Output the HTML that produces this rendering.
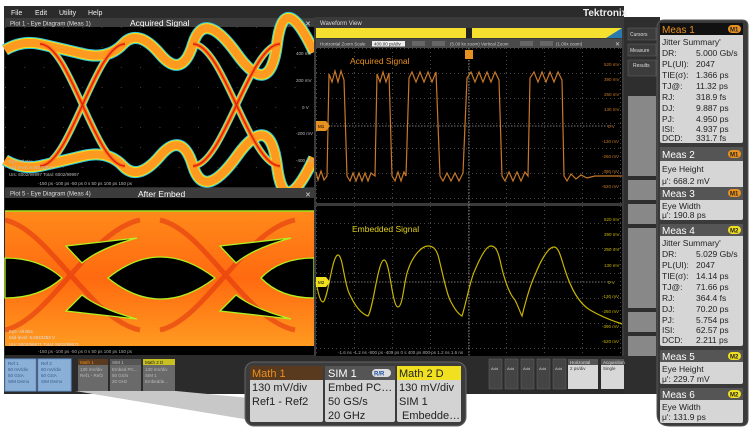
<!DOCTYPE html>
<html><head><meta charset="utf-8"><style>
html,body{margin:0;padding:0;background:#fff;width:750px;height:430px;overflow:hidden}
svg{display:block;font-family:"Liberation Sans",sans-serif}
</style></head><body>
<svg width="750" height="430" viewBox="0 0 750 430" xmlns="http://www.w3.org/2000/svg">
<defs>
<pattern id="g1" width="19.3" height="20" patternUnits="userSpaceOnUse" x="5" y="27"><circle cx="0.5" cy="0.5" r="0.5" fill="#555"/></pattern>
<pattern id="g2" width="38" height="25" patternUnits="userSpaceOnUse" x="316" y="48"><path d="M0 0.5H38" stroke="#444" stroke-dasharray="1 3"/><path d="M0.5 0V25" stroke="#444" stroke-dasharray="1 3"/></pattern>
<linearGradient id="og" x1="0" y1="0" x2="0" y2="1"><stop offset="0" stop-color="#ff8a1a"/><stop offset="0.5" stop-color="#ff6a10"/><stop offset="1" stop-color="#ff9a20"/></linearGradient>
</defs>
<rect width="750" height="430" fill="#fff"/>
<rect x="4" y="6" width="620" height="388" fill="#2b2b2b"/>
<text x="11" y="15" font-size="7" fill="#eee">File</text>
<text x="35" y="15" font-size="7" fill="#eee">Edit</text>
<text x="59" y="15" font-size="7" fill="#eee">Utility</text>
<text x="88" y="15" font-size="7" fill="#eee">Help</text>
<!-- plot 1 -->
<rect x="5" y="18" width="309" height="9" fill="#3c3c3c"/>
<text x="10" y="25.5" font-size="6" fill="#ddd">Plot 1 - Eye Diagram (Meas 1)</text>
<text x="130" y="26" font-size="8.5" fill="#fff">Acquired Signal</text>
<text x="305" y="26" font-size="7" fill="#ddd">✕</text>
<rect x="5" y="27" width="309" height="160" fill="#000"/>
<rect x="5" y="27" width="309" height="160" fill="url(#g1)"/>
<g fill="none" stroke-linecap="butt">
<g stroke="#2ec8e0" stroke-width="12">
<path d="M5,50 Q22,40 40,44 T83,54 T123,44 T160,54 T193,44 T237,54 T277,44 T314,52"/>
<path d="M5,160 Q22,170 40,166 T83,156 T123,166 T160,156 T193,166 T237,156 T277,166 T314,158"/>
</g>
<g stroke="#2ec8e0" stroke-width="7">
<path d="M40,44 C70,44 95,166 125,166"/><path d="M40,166 C70,166 95,44 125,44"/>
<path d="M193,44 C223,44 250,166 280,166"/><path d="M193,166 C223,166 250,44 280,44"/>
</g>
<g stroke="#f0e020" stroke-width="10">
<path d="M5,50 Q22,40 40,44 T83,54 T123,44 T160,54 T193,44 T237,54 T277,44 T314,52"/>
<path d="M5,160 Q22,170 40,166 T83,156 T123,166 T160,156 T193,166 T237,156 T277,166 T314,158"/>
</g>
<g stroke="#f0e020" stroke-width="5.5">
<path d="M40,44 C70,44 95,166 125,166"/><path d="M40,166 C70,166 95,44 125,44"/>
<path d="M193,44 C223,44 250,166 280,166"/><path d="M193,166 C223,166 250,44 280,44"/>
</g>
<g stroke="#ff9a20" stroke-width="8">
<path d="M5,50 Q22,40 40,44 T83,54 T123,44 T160,54 T193,44 T237,54 T277,44 T314,52"/>
<path d="M5,160 Q22,170 40,166 T83,156 T123,166 T160,156 T193,166 T237,156 T277,166 T314,158"/>
</g>
<g stroke="#ff7a18" stroke-width="4">
<path d="M40,44 C70,44 95,166 125,166"/><path d="M40,166 C70,166 95,44 125,44"/>
<path d="M193,44 C223,44 250,166 280,166"/><path d="M193,166 C223,166 250,44 280,44"/>
</g>
<g stroke="#e02010" stroke-width="1.5">
<path d="M40,44 C70,44 95,166 125,166"/><path d="M40,166 C70,166 95,44 125,44"/>
<path d="M193,44 C223,44 250,166 280,166"/><path d="M193,166 C223,166 250,44 280,44"/>
</g>
</g>
<g font-size="4.5" fill="#bbb"><text x="296" y="55">400 mV</text><text x="296" y="82">200 mV</text><text x="302" y="109">0 V</text><text x="296" y="135">-200 mV</text><text x="296" y="162">-400 mV</text>
<text x="9" y="163">Eye: All Bits</text><text x="9" y="169">Mid-level: 5.6023283 V</text><text x="9" y="176">UIs: 6002/99997  Total: 6002/99997</text>
<text x="38" y="185">-150 ps   -100 ps    -50 ps     0 s       50 ps     100 ps    150 ps</text></g>
<!-- plot 5 -->
<rect x="5" y="188" width="309" height="10" fill="#3c3c3c"/>
<text x="10" y="195.5" font-size="6" fill="#ddd">Plot 5 - Eye Diagram (Meas 4)</text>
<text x="138" y="197" font-size="8.5" fill="#fff">After Embed</text>
<text x="305" y="197" font-size="7" fill="#ddd">✕</text>
<rect x="5" y="198" width="309" height="157" fill="#000"/>
<rect x="5" y="211" width="309" height="135" fill="url(#og)"/>
<path d="M5,211H314" stroke="#a0e020" stroke-width="1.5"/>
<g fill="none" stroke="#e03010" stroke-width="5" opacity="0.55">
<path d="M5,220 C50,230 90,320 140,330"/><path d="M5,330 C50,320 90,230 140,220"/>
<path d="M160,220 C205,230 245,320 295,330"/><path d="M160,330 C205,320 245,230 295,220"/>
</g>
<g fill="#000" stroke="#b0f020" stroke-width="1.3">
<path d="M108,278 Q160,236 215,278 Q160,320 108,278Z"/>
<path d="M5,258 Q40,258 62,278 Q40,298 5,298Z"/>
<path d="M314,258 Q280,258 261,278 Q280,298 314,298Z"/>
<path d="M66,246 L137,238 Q100,248 82,263Z"/>
<path d="M66,311 L137,319 Q100,309 82,295Z"/>
<path d="M220,246 L291,238 Q254,248 236,263Z"/>
<path d="M220,311 L291,319 Q254,309 236,295Z"/>
</g>
<g font-size="4.5" fill="#ddd"><text x="9" y="333">Eye: All Bits</text><text x="9" y="339">Mid-level: 5.6023283 V</text><text x="9" y="346">UIs: 5002/99671  Total: 5002/99671</text>
<text x="38" y="353" fill="#aaa">-150 ps   -100 ps    -50 ps     0 s       50 ps     100 ps    150 ps</text></g>
<!-- waveform view -->
<rect x="314" y="17" width="310" height="340" fill="#3a3a3a"/>
<text x="320" y="25" font-size="6" fill="#ddd">Waveform View</text>
<rect x="316" y="28" width="306" height="10" fill="#f5e030"/>
<rect x="466" y="28" width="6" height="10" fill="#222"/>
<path d="M606,38 L622,28 L622,38Z" fill="#2a7ab0"/>
<rect x="316" y="39" width="306" height="9" fill="#4a4a4a"/>
<text x="320" y="45.5" font-size="4.5" fill="#ccc">Horizontal Zoom Scale</text>
<rect x="372" y="41" width="33" height="5.5" fill="#eee"/><text x="374" y="45.5" font-size="4.5" fill="#222">400.00 ps/div</text>
<rect x="412" y="41" width="13" height="5" fill="#666"/><rect x="432" y="41" width="13" height="5" fill="#666"/>
<text x="450" y="45.5" font-size="4.5" fill="#ccc">(5.00 kx zoom)   Vertical Zoom</text>
<rect x="520" y="41" width="13" height="5" fill="#666"/><rect x="540" y="41" width="13" height="5" fill="#666"/>
<text x="556" y="45.5" font-size="4.5" fill="#ccc">(1.00x zoom)</text>
<text x="615" y="46" font-size="6" fill="#ccc">✕</text>
<rect x="316" y="48" width="306" height="155" fill="#000"/>
<rect x="316" y="206" width="306" height="150" fill="#000"/>
<rect x="316" y="48" width="306" height="308" fill="url(#g2)"/>
<path d="M469,48V356" stroke="#888" stroke-dasharray="1.5 1.5"/>
<path d="M316,126H612" stroke="#777" stroke-dasharray="1.5 1.5"/>
<path d="M316,282H612" stroke="#777" stroke-dasharray="1.5 1.5"/>
<rect x="465" y="50" width="8" height="9" fill="#e89020"/>
<text x="350" y="64" font-size="8.5" fill="#e89020">Acquired Signal</text>
<text x="352" y="232" font-size="8.5" fill="#e0d020">Embedded Signal</text>
<path fill="none" stroke="#c87828" stroke-width="1.2" d="M316,172 L318,180 L321,171 L324,180 L327,176 L329,74 L332,82 L335,71 L338,82 L341,71 L344,80 L347,176 L350,181 L353,173 L356,181 L359,173 L362,181 L365,173 L368,181 L371,173 L375,176 L377,74 L380,82 L383,72 L386,82 L389,73 L392,176 L395,181 L398,172 L401,181 L404,172 L406,176 L409,78 L412,72 L416,82 L420,72 L424,82 L428,72 L432,82 L436,72 L440,176 L443,181 L447,173 L451,181 L455,173 L459,181 L463,173 L467,78 L471,72 L475,82 L479,72 L483,82 L487,72 L491,82 L495,72 L499,80 L502,176 L505,181 L509,172 L513,181 L517,172 L521,181 L525,172 L528,176 L530,78 L534,72 L538,82 L542,72 L546,82 L550,72 L554,82 L558,72 L562,80 L564,176 L567,181 L571,174 L576,179 L581,175 L587,178 L595,176 L622,176"/>
<path fill="none" stroke="#c8b400" stroke-width="1.2" d="M316,282 C318,292 320,302 323,302 C328,300 332,255 338,255 C343,255 344,285 350,295 C356,308 362,314 368,316 C373,310 378,260 384,260 C390,260 392,307 398,307 C403,307 404,280 408,270 C413,255 422,246 428,246 C434,246 436,250 438,255 C442,270 446,292 450,300 C454,308 458,314 462,316 C467,300 470,280 475,270 C480,258 486,246 491,246 C496,246 498,252 500,260 C504,280 510,295 515,300 C518,306 520,312 522,316 C526,300 530,285 535,275 C540,262 548,247 554,247 C559,247 561,258 565,270 C572,292 580,304 590,310 C600,316 610,320 622,324"/>
<path d="M316,121 H326 L330,126 L326,131 H316Z" fill="#e89020"/><text x="318" y="128" font-size="4.5" fill="#000">M1</text>
<path d="M316,277 H326 L330,282 L326,287 H316Z" fill="#f0e020"/><text x="318" y="284" font-size="4.5" fill="#000">M2</text>
<g font-size="4.5" fill="#c87828"><text x="604" y="66">520 mV</text><text x="604" y="81">390 mV</text><text x="604" y="96">260 mV</text><text x="604" y="111">130 mV</text><text x="608" y="128">0 V</text><text x="602" y="143">-130 mV</text><text x="602" y="158">-260 mV</text><text x="602" y="173">-390 mV</text><text x="602" y="188">-520 mV</text></g>
<g font-size="4.5" fill="#c8b400"><text x="604" y="221">520 mV</text><text x="604" y="236">390 mV</text><text x="604" y="251">260 mV</text><text x="604" y="267">130 mV</text><text x="608" y="284">0 V</text><text x="602" y="298">-130 mV</text><text x="602" y="313">-260 mV</text><text x="602" y="328">-390 mV</text><text x="602" y="343">-520 mV</text></g>
<text x="338" y="354" font-size="4.5" fill="#aaa">-1.6 ns      -1.2 ns      -800 ps      -400 ps       0 s        400 ps       800 ps       1.2 ns       1.6 ns</text>
<!-- right tool column -->
<rect x="624" y="17" width="36" height="377" fill="#2e2e2e"/>
<text x="583" y="16" font-size="10" font-weight="bold" fill="#eee">Tektronix</text>
<rect x="628" y="28" width="28" height="12" fill="#3c3c3c" stroke="#666" stroke-width="0.5"/><text x="630" y="36" font-size="5" fill="#ddd">Cursors</text>
<rect x="628" y="44" width="28" height="12" fill="#3c3c3c" stroke="#666" stroke-width="0.5"/><text x="630" y="52" font-size="5" fill="#ddd">Measure</text>
<rect x="628" y="60" width="28" height="16" fill="#3c3c3c" stroke="#666" stroke-width="0.5"/><text x="633" y="67" font-size="5" fill="#ddd">Results</text>
<rect x="628" y="96" width="28" height="80" fill="#888"/>
<rect x="628" y="180" width="28" height="20" fill="#888"/>
<rect x="628" y="204" width="28" height="20" fill="#888"/>
<rect x="628" y="228" width="28" height="80" fill="#888"/>
<rect x="628" y="312" width="28" height="20" fill="#888"/>
<rect x="628" y="336" width="28" height="20" fill="#888"/>
<!-- bottom bar -->
<rect x="4" y="356" width="620" height="38" fill="#2b2b2b"/>
<rect x="5" y="359" width="31" height="32" fill="#8ab0d8" stroke="#6a9ad0"/>
<rect x="38" y="359" width="33" height="32" fill="#8ab0d8" stroke="#6a9ad0"/>
<g font-size="4.5" fill="#3a5a8a"><text x="8" y="365">Ref 1</text><text x="8" y="371">60 mV/div</text><text x="8" y="377">50 GSA</text><text x="8" y="383">SIM Demo</text>
<text x="41" y="365">Ref 2</text><text x="41" y="371">60 mV/div</text><text x="41" y="377">50 GSA</text><text x="41" y="383">SIM Demo</text></g>
<rect x="78" y="359" width="30" height="32" fill="#6a6a6a"/><rect x="78" y="359" width="30" height="6" fill="#5a3a1e"/>
<rect x="110" y="359" width="31" height="32" fill="#6a6a6a"/><rect x="110" y="359" width="31" height="6" fill="#555"/>
<rect x="143" y="359" width="32" height="32" fill="#6a6a6a"/><rect x="143" y="359" width="32" height="6" fill="#c8c020"/>
<g font-size="4.5" fill="#bbb"><text x="80" y="364" fill="#e89020">Math 1</text><text x="80" y="371">130 mV/div</text><text x="80" y="377">Ref1 - Ref2</text>
<text x="112" y="364">SIM 1</text><text x="112" y="371">Embed PC...</text><text x="112" y="377">50 GS/s</text><text x="112" y="383">20 GHz</text>
<text x="145" y="364" fill="#222">Math 2  D</text><text x="145" y="371">130 mV/div</text><text x="145" y="377">SIM 1</text><text x="145" y="383">Embedde...</text></g>
<g fill="#444" stroke="#666" stroke-width="0.5"><rect x="489" y="359" width="13" height="30"/><rect x="505" y="359" width="13" height="30"/><rect x="521" y="359" width="13" height="30"/><rect x="537" y="359" width="13" height="30"/><rect x="553" y="359" width="13" height="30"/></g>
<g font-size="4" fill="#ccc"><text x="491" y="370">Add</text><text x="507" y="370">Add</text><text x="523" y="370">Add</text><text x="539" y="370">Add</text><text x="555" y="370">Add</text></g>
<rect x="568" y="359" width="30" height="30" fill="#d8d8d8"/><rect x="568" y="359" width="30" height="6" fill="#555"/><text x="570" y="364" font-size="4.5" fill="#ddd">Horizontal</text><text x="570" y="370" font-size="4.5" fill="#333">2 ps/div</text>
<rect x="601" y="359" width="23" height="30" fill="#d8d8d8"/><rect x="601" y="359" width="23" height="6" fill="#555"/><text x="603" y="364" font-size="4.5" fill="#ddd">Acquisition</text><text x="603" y="370" font-size="4.5" fill="#333">Single</text>
<!-- wedge -->
<path d="M75,391 L176,391 L250,398 L250,420Z" fill="#c8c8c8"/>
<!-- Math callout -->
<rect x="245" y="362" width="221" height="64" rx="9" fill="#3c3c3c" stroke="#666"/>
<rect x="250" y="366" width="73" height="56" rx="2" fill="#d3d3d3"/><rect x="250" y="366" width="73" height="14" fill="#5a3a1e"/>
<rect x="325" y="366" width="70" height="56" rx="2" fill="#d3d3d3"/><rect x="325" y="366" width="70" height="14" fill="#555"/>
<rect x="397" y="366" width="64" height="56" rx="2" fill="#d3d3d3"/><rect x="397" y="366" width="64" height="14" fill="#f0e020"/>
<g font-size="11" fill="#222">
<text x="252" y="377" fill="#e89020">Math 1</text><text x="252" y="391">130 mV/div</text><text x="252" y="405">Ref1 - Ref2</text>
<text x="328" y="377" fill="#fff">SIM 1</text><text x="328" y="391">Embed PC…</text><text x="328" y="405">50 GS/s</text><text x="328" y="419">20 GHz</text>
<text x="399" y="377">Math 2   D</text><text x="399" y="391">130 mV/div</text><text x="399" y="405">SIM 1</text><text x="402" y="419">Embedde…</text></g>
<rect x="372" y="369" width="19" height="8" rx="4" fill="#ddd"/><text x="374" y="375.5" font-size="6" font-weight="bold" fill="#2050a0">R/R</text>
<!-- Meas panel -->
<path d="M664,20 H742 Q748,20 748,26 V419 Q748,426 741,426 H670 Q657,426 657,414 V28 Q657,20 664,20Z" fill="#3a3a3a" stroke="#555"/>
<g font-size="8.5" fill="#222">
<rect x="660" y="23" width="83" height="120" rx="2" fill="#d6d6d6"/><rect x="660" y="23" width="83" height="12" fill="#111"/>
<text x="662" y="33" font-size="10" fill="#e89020">Meas 1</text>
<text x="662" y="45">Jitter Summary'</text>
<text x="662" y="56">DR:</text><text x="696" y="56">5.000 Gb/s</text>
<text x="662" y="67">PL(UI):</text><text x="696" y="67">2047</text>
<text x="662" y="78">TIE(σ):</text><text x="696" y="78">1.366 ps</text>
<text x="662" y="89">TJ@:</text><text x="696" y="89">11.32 ps</text>
<text x="662" y="100">RJ:</text><text x="696" y="100">318.9 fs</text>
<text x="662" y="111">DJ:</text><text x="696" y="111">9.887 ps</text>
<text x="662" y="122">PJ:</text><text x="696" y="122">4.950 ps</text>
<text x="662" y="132">ISI:</text><text x="696" y="132">4.937 ps</text>
<text x="662" y="141">DCD:</text><text x="696" y="141">331.7 fs</text>
<rect x="660" y="147" width="83" height="46" rx="2" fill="#d6d6d6"/><rect x="660" y="147" width="83" height="14" fill="#555"/>
<text x="662" y="158" font-size="10" fill="#fff">Meas 2</text><text x="662" y="172">Eye Height</text><text x="662" y="184">μ': 668.2 mV</text>
<rect x="660" y="187" width="83" height="33" rx="2" fill="#d6d6d6"/><rect x="660" y="187" width="83" height="13" fill="#555"/>
<text x="662" y="197" font-size="10" fill="#fff">Meas 3</text><text x="662" y="209">Eye Width</text><text x="662" y="218">μ': 190.8 ps</text>
<rect x="660" y="224" width="83" height="122" rx="2" fill="#d6d6d6"/><rect x="660" y="224" width="83" height="12" fill="#555"/>
<text x="662" y="234" font-size="10" fill="#fff">Meas 4</text>
<text x="662" y="246">Jitter Summary'</text>
<text x="662" y="257">DR:</text><text x="696" y="257">5.029 Gb/s</text>
<text x="662" y="268">PL(UI):</text><text x="696" y="268">2047</text>
<text x="662" y="279">TIE(σ):</text><text x="696" y="279">14.14 ps</text>
<text x="662" y="290">TJ@:</text><text x="696" y="290">71.66 ps</text>
<text x="662" y="301">RJ:</text><text x="696" y="301">364.4 fs</text>
<text x="662" y="312">DJ:</text><text x="696" y="312">70.20 ps</text>
<text x="662" y="323">PJ:</text><text x="696" y="323">5.754 ps</text>
<text x="662" y="333">ISI:</text><text x="696" y="333">62.57 ps</text>
<text x="662" y="343">DCD:</text><text x="696" y="343">2.211 ps</text>
<rect x="660" y="350" width="83" height="34" rx="2" fill="#d6d6d6"/><rect x="660" y="350" width="83" height="12" fill="#555"/>
<text x="662" y="360" font-size="10" fill="#fff">Meas 5</text><text x="662" y="372">Eye Height</text><text x="662" y="382">μ': 229.7 mV</text>
<rect x="660" y="388" width="83" height="35" rx="2" fill="#d6d6d6"/><rect x="660" y="388" width="83" height="12" fill="#555"/>
<text x="662" y="398" font-size="10" fill="#fff">Meas 6</text><text x="662" y="410">Eye Width</text><text x="662" y="420">μ': 131.9 ps</text>
</g>
<g font-size="6" font-weight="bold" fill="#222">
<rect x="728" y="25" width="13" height="8" rx="4" fill="#e89020"/><text x="730" y="31.5">M1</text>
<rect x="728" y="150" width="13" height="8" rx="4" fill="#e89020"/><text x="730" y="156.5">M1</text>
<rect x="728" y="189" width="13" height="8" rx="4" fill="#e89020"/><text x="730" y="195.5">M1</text>
<rect x="728" y="226" width="13" height="8" rx="4" fill="#f0e020"/><text x="730" y="232.5">M2</text>
<rect x="728" y="352" width="13" height="8" rx="4" fill="#f0e020"/><text x="730" y="358.5">M2</text>
<rect x="728" y="390" width="13" height="8" rx="4" fill="#f0e020"/><text x="730" y="396.5">M2</text>
</g>
</svg>
</body></html>
